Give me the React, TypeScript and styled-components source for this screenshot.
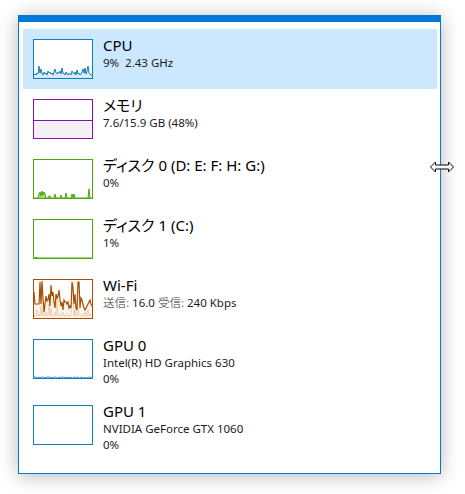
import React from 'react'
import styled, { createGlobalStyle } from 'styled-components'

const GlobalStyle = createGlobalStyle`
  html, body {
    margin: 0;
    padding: 0;
    background: #ffffff;
  }
  body {
    font-family: "Noto Sans", "Noto Sans CJK JP", sans-serif;
    font-feature-settings: "palt";
    color: #000;
  }
`

const Page = styled.div`
  position: relative;
  width: 465px;
  height: 494px;
  padding: 15px 0 0 18px;
  box-sizing: border-box;
`

const Window = styled.div`
  width: 423px;
  height: 459px;
  box-sizing: border-box;
  background: #fff;
  border: 1px solid #0078d7;
  border-top-width: 7px;
  box-shadow: 0 2px 18px rgba(0, 0, 0, 0.28);
  padding: 7px 3px 0 4px;
`

const List = styled.div`
  display: flex;
  flex-direction: column;
`

const Row = styled.div<{ $selected?: boolean; $tall?: boolean }>`
  display: flex;
  align-items: flex-start;
  gap: 10px;
  height: ${(p) => (p.$tall ? 66 : 60)}px;
  box-sizing: border-box;
  padding: 10px 10px 0;
  background: ${(p) => (p.$selected ? '#cce8ff' : 'transparent')};
`

const Graph = styled.div<{ $color: string; $fill?: string }>`
  flex: none;
  width: 60px;
  height: 40px;
  box-sizing: border-box;
  border: 1px solid ${(p) => p.$color};
  background: ${(p) => p.$fill || '#fff'};
  svg {
    display: block;
  }
`

const Info = styled.div`
  display: flex;
  flex-direction: column;
  margin-top: -4px;
`

const Title = styled.div`
  font-size: 15px;
  line-height: 20px;
  color: #000;
  white-space: nowrap;
`

const Sub = styled.div`
  font-size: 11.5px;
  line-height: 16px;
  color: #1b1b1b;
  white-space: nowrap;
`

const Label = styled.span`
  color: #707070;
`

const Cursor = styled.div`
  position: absolute;
  left: 430px;
  top: 161px;
  width: 24px;
  height: 12px;
  svg {
    display: block;
  }
`

const toPath = (vals: number[], w = 58, h = 38) => {
  const step = w / (vals.length - 1)
  return vals.map((v, i) => `${(i * step).toFixed(2)},${(h - v).toFixed(2)}`).join(' ')
}

const cpu = [
  3, 4, 3, 5, 4, 12, 5, 9, 4, 3, 6, 4, 5, 3, 7, 5, 6, 4, 5, 3, 6, 9, 5, 4, 6, 5, 7, 4, 10, 5, 4, 3, 6,
  4, 3, 5, 4, 3, 7, 5, 4, 6, 3, 8, 4, 5, 3, 4, 6, 9, 5, 10, 4, 7, 12, 5, 4, 3, 3,
]

const disk0 = [
  0, 0, 0, 0, 0, 4, 6, 2, 7, 3, 6, 4, 0, 0, 0, 2, 2, 0, 0, 0, 0, 4, 0, 0, 0, 0, 0, 3, 0, 0, 0, 0, 5,
  0, 0, 0, 0, 0, 4, 0, 4, 0, 0, 0, 0, 0, 0, 0, 0, 0, 0, 0, 0, 0, 0, 9, 0, 0, 0,
]

const disk1 = [
  0, 0, 1, 0, 0, 0, 0, 0, 0, 0, 0, 0, 0, 0, 0, 0, 0, 0, 0, 0, 0, 0, 0, 0, 0, 0, 0, 0, 0, 0, 0, 0, 0,
  0, 0, 0, 0, 0, 0, 0, 0, 0, 0, 0, 0, 0, 0, 0, 0, 0, 0, 0, 0, 0, 0, 0, 0, 0, 0,
]

const wifiMain = [
  26, 14, 14, 14, 14, 14, 36, 14, 37, 20, 6, 14, 22, 17, 18, 24, 12, 33, 22, 26, 16, 10, 24, 20, 22,
  28, 18, 12, 16, 8, 18, 16, 16, 14, 16, 10, 12, 10, 36, 30, 14, 24, 10, 8, 36, 36, 10, 20, 18, 14,
  10, 8, 10, 12, 14, 16, 18, 14, 12,
]

const wifiDot = [
  2, 2, 2, 8, 2, 4, 2, 12, 2, 8, 2, 2, 6, 2, 2, 14, 2, 10, 2, 2, 2, 6, 2, 20, 2, 2, 4, 2, 2, 6, 2,
  2, 2, 4, 2, 2, 2, 2, 30, 36, 2, 8, 2, 2, 10, 2, 2, 2, 4, 2, 2, 6, 2, 2, 8, 2, 4, 2, 2,
]

const gpu0 = [
  1, 1, 1, 0, 1, 1, 0, 1, 1, 1, 0, 1, 0, 1, 1, 1, 0, 1, 1, 0, 1, 1, 1, 0, 0, 1, 1, 0, 1, 1, 1, 0, 1,
  0, 1, 1, 0, 1, 0, 0, 1, 1, 0, 1, 1, 0, 0, 1, 1, 0, 0, 1, 0, 0, 1, 1, 0, 1, 1,
]

const LineGraph = ({
  vals,
  stroke,
  fill,
  width = 1,
}: {
  vals: number[]
  stroke: string
  fill: string
  width?: number
}) => (
  <svg width="58" height="38" viewBox="0 0 58 38">
    <polygon points={`0,38 ${toPath(vals)} 58,38`} fill={fill} />
    <polyline points={toPath(vals)} fill="none" stroke={stroke} strokeWidth={width} />
  </svg>
)

const App = () => (
  <Page>
    <GlobalStyle />
    <Window>
      <List>
        <Row $selected>
          <Graph $color="#117dbb">
            <LineGraph vals={cpu} stroke="#117dbb" fill="#d9eaf5" />
          </Graph>
          <Info>
            <Title>CPU</Title>
            <Sub>9%&nbsp;&nbsp;2.43 GHz</Sub>
          </Info>
        </Row>
        <Row>
          <Graph $color="#8b12ae">
            <svg width="58" height="38" viewBox="0 0 58 38">
              <rect x="0" y="20" width="58" height="18" fill="#f3f1f5" />
              <line x1="0" y1="20.5" x2="58" y2="20.5" stroke="#8b12ae" strokeWidth="1" />
            </svg>
          </Graph>
          <Info>
            <Title>メモリ</Title>
            <Sub>7.6/15.9 GB (48%)</Sub>
          </Info>
        </Row>
        <Row>
          <Graph $color="#4da60c">
            <LineGraph vals={disk0} stroke="#4da60c" fill="#a6d67f" />
          </Graph>
          <Info>
            <Title>ディスク 0 (D: E: F: H: G:)</Title>
            <Sub>0%</Sub>
          </Info>
        </Row>
        <Row>
          <Graph $color="#4da60c">
            <LineGraph vals={disk1} stroke="#4da60c" fill="#a6d67f" />
          </Graph>
          <Info>
            <Title>ディスク 1 (C:)</Title>
            <Sub>1%</Sub>
          </Info>
        </Row>
        <Row>
          <Graph $color="#a74f01">
            <svg width="58" height="38" viewBox="0 0 58 38">
              <polygon points={`0,38 ${toPath(wifiMain)} 58,38`} fill="#fcf3eb" />
              <polyline
                points={toPath(wifiDot)}
                fill="none"
                stroke="#eab08f"
                strokeWidth="1"
                strokeDasharray="1 1"
              />
              <polyline points={toPath(wifiMain)} fill="none" stroke="#a74f01" strokeWidth="1.2" />
            </svg>
          </Graph>
          <Info>
            <Title>Wi-Fi</Title>
            <Sub>
              <Label>送信:</Label> 16.0 <Label>受信:</Label> 240 Kbps
            </Sub>
          </Info>
        </Row>
        <Row $tall>
          <Graph $color="#117dbb">
            <LineGraph vals={gpu0} stroke="#4a9ccf" fill="#eaf3f9" />
          </Graph>
          <Info>
            <Title>GPU 0</Title>
            <Sub>Intel(R) HD Graphics 630</Sub>
            <Sub>0%</Sub>
          </Info>
        </Row>
        <Row $tall>
          <Graph $color="#117dbb" />
          <Info>
            <Title>GPU 1</Title>
            <Sub>NVIDIA GeForce GTX 1060</Sub>
            <Sub>0%</Sub>
          </Info>
        </Row>
      </List>
    </Window>
    <Cursor>
      <svg width="24" height="12" viewBox="0 0 24 12">
        <path
          d="M0.5 6 L5.5 1 L5.5 4 L18.5 4 L18.5 1 L23.5 6 L18.5 11 L18.5 8 L5.5 8 L5.5 11 Z"
          fill="#fff"
          stroke="#000"
          strokeWidth="1"
          strokeLinejoin="miter"
        />
      </svg>
    </Cursor>
  </Page>
)

export default App
